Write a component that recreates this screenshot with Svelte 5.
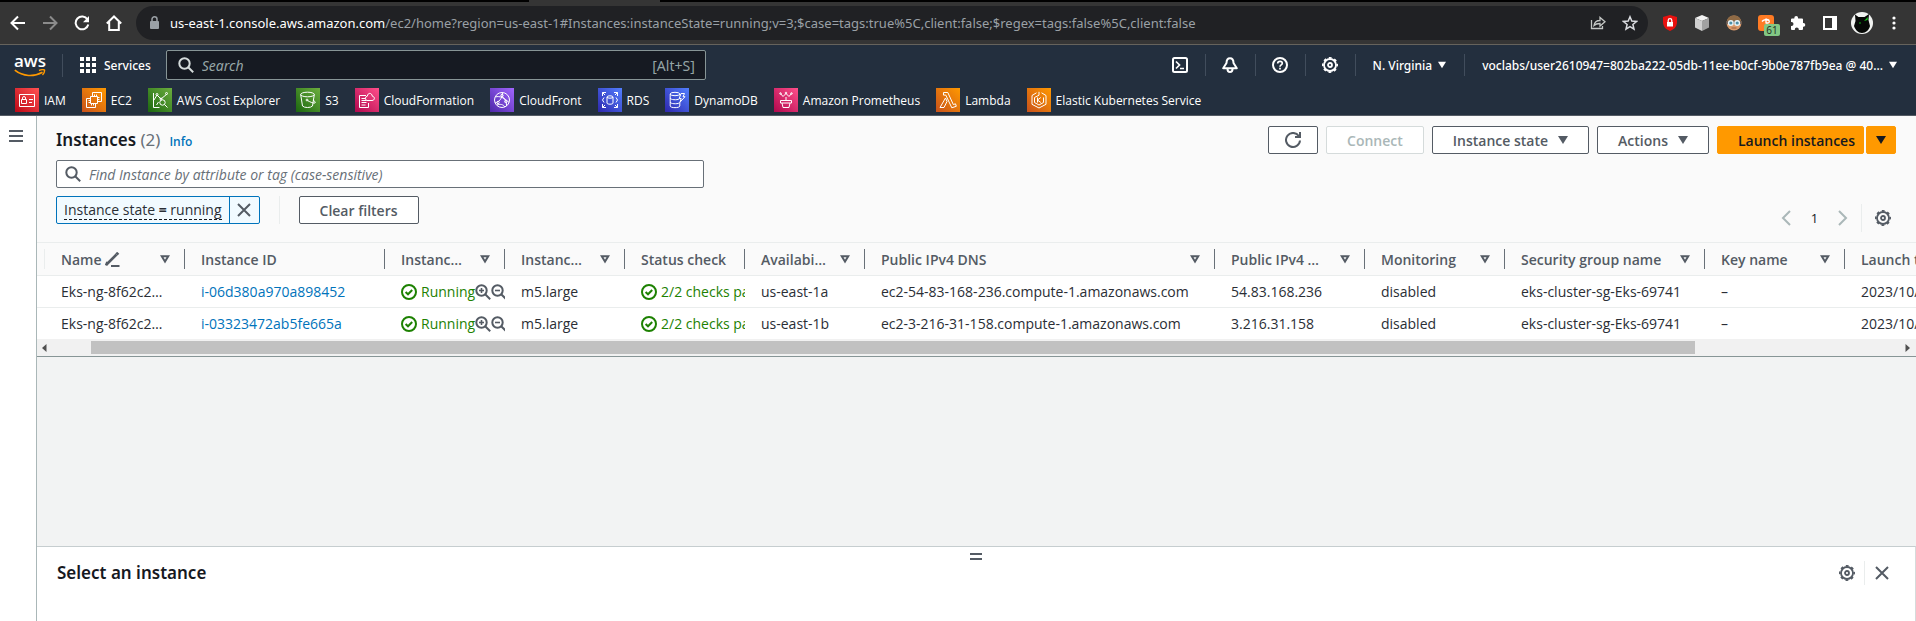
<script>
  const bookmarks = [
    { id: 'iam', label: 'IAM', from: '#bd0816', to: '#ff5252' },
    { id: 'ec2', label: 'EC2', from: '#c8511b', to: '#ff9900' },
    { id: 'cost', label: 'AWS Cost Explorer', from: '#1b660f', to: '#6cae3e' },
    { id: 's3', label: 'S3', from: '#1b660f', to: '#6cae3e' },
    { id: 'cfn', label: 'CloudFormation', from: '#b0084d', to: '#ff4f8b' },
    { id: 'cdn', label: 'CloudFront', from: '#4d27a8', to: '#a166ff' },
    { id: 'rds', label: 'RDS', from: '#2e27ad', to: '#527fff' },
    { id: 'ddb', label: 'DynamoDB', from: '#2e27ad', to: '#527fff' },
    { id: 'amp', label: 'Amazon Prometheus', from: '#b0084d', to: '#ff4f8b' },
    { id: 'lambda', label: 'Lambda', from: '#c8511b', to: '#ff9900' },
    { id: 'eks', label: 'Elastic Kubernetes Service', from: '#c8511b', to: '#ff9900' }
  ];

  const columns = [
    { key: 'name', label: 'Name', width: 140, sort: true, edit: true },
    { key: 'id', label: 'Instance ID', width: 200 },
    { key: 'state', label: 'Instanc…', width: 120, sort: true },
    { key: 'type', label: 'Instanc…', width: 120, sort: true },
    { key: 'check', label: 'Status check', width: 120 },
    { key: 'zone', label: 'Availabi…', width: 120, sort: true },
    { key: 'dns', label: 'Public IPv4 DNS', width: 350, sort: true },
    { key: 'ip', label: 'Public IPv4 …', width: 150, sort: true },
    { key: 'monitoring', label: 'Monitoring', width: 140, sort: true },
    { key: 'group', label: 'Security group name', width: 200, sort: true },
    { key: 'keyName', label: 'Key name', width: 140, sort: true },
    { key: 'launch', label: 'Launch time', width: 160 }
  ];

  const rows = [
    {
      name: 'Eks-ng-8f62c2…', id: 'i-06d380a970a898452', state: 'Running', type: 'm5.large',
      check: '2/2 checks passed', zone: 'us-east-1a',
      dns: 'ec2-54-83-168-236.compute-1.amazonaws.com', ip: '54.83.168.236',
      monitoring: 'disabled', group: 'eks-cluster-sg-Eks-69741', keyName: '–', launch: '2023/10/10'
    },
    {
      name: 'Eks-ng-8f62c2…', id: 'i-03323472ab5fe665a', state: 'Running', type: 'm5.large',
      check: '2/2 checks passed', zone: 'us-east-1b',
      dns: 'ec2-3-216-31-158.compute-1.amazonaws.com', ip: '3.216.31.158',
      monitoring: 'disabled', group: 'eks-cluster-sg-Eks-69741', keyName: '–', launch: '2023/10/10'
    }
  ];
</script>

{#snippet gear()}
  <svg class="ico" width="16" height="16" viewBox="0 0 16 16" fill="none" stroke="currentColor" aria-hidden="true">
    <circle cx="8" cy="8" r="6" stroke-width="1.800" />
    <circle cx="8" cy="8" r="7.200" stroke-width="1.600" stroke-dasharray="2.830 2.824" stroke-dashoffset="1.400" />
    <circle cx="8" cy="8" r="2" stroke-width="1.800" />
  </svg>
{/snippet}

{#snippet caret(size)}
  <svg class="ico" width={size} height={size} viewBox="0 0 10 10" aria-hidden="true">
    <path d="M0 1h10L5 9z" fill="currentColor" />
  </svg>
{/snippet}

{#snippet cross()}
  <svg class="ico" width="16" height="16" viewBox="0 0 16 16" aria-hidden="true">
    <path d="M2 2l12 12M14 2L2 14" stroke="currentColor" stroke-width="2" />
  </svg>
{/snippet}

{#snippet lens(mark)}
  <svg class="ico" width="16" height="16" viewBox="0 0 16 16" fill="none" stroke="currentColor" stroke-width="2" aria-hidden="true">
    <circle cx="6.500" cy="6.500" r="5.200" />
    <path d="M10.200 10.200l5 5" />
    {#if mark}<path d="M4 6.500h5" stroke-width="1.600" />{/if}
    {#if mark === 'plus'}<path d="M6.500 4v5" stroke-width="1.600" />{/if}
  </svg>
{/snippet}

{#snippet okay()}
  <svg class="ico" width="16" height="16" viewBox="0 0 16 16" fill="none" stroke="currentColor" stroke-width="2" aria-hidden="true">
    <circle cx="8" cy="8" r="7" />
    <path d="M4.600 8l2.400 2.300 4.200-4.300" />
  </svg>
{/snippet}

{#snippet service(id)}
  <svg width="24" height="24" viewBox="0 0 24 24" fill="none" stroke="#fff" stroke-width="1" aria-hidden="true">
    {#if id === 'iam'}
      <path d="M4.500 6.500h15v12h-15zM6.500 11.500h5v4h-5zM7.500 11.500v-1.500a1.500 1.500 0 0 1 3 0v1.500M14 11.500h4M14 14.500h3" />
    {:else if id === 'ec2'}
      <path d="M10.500 7V4.500h9v9H17M7 10.500H4.500v9h9V17" />
      <path d="M8.500 8.500h7v7h-7zM10.500 6.500v2M12.500 6.500v2M14.500 6.500v2M9.500 15.500v2M11.500 15.500v2M13.500 15.500v2M6.500 10.500h2M6.500 12.500h2M6.500 14.500h2M15.500 9.500h2M15.500 11.500h2M15.500 13.500h2" />
    {:else if id === 'cost'}
      <path d="M5.500 5v14.500h6M6 12l3-5 4 4 6-5M8.500 17l2-3" />
      <circle cx="9" cy="6.500" r="1" /><circle cx="13" cy="11" r="1" /><circle cx="18.500" cy="5.500" r="1" />
      <circle cx="14.500" cy="14.500" r="2.700" /><path d="M16.500 16.500l3 3" />
    {:else if id === 's3'}
      <ellipse cx="11.500" cy="6.500" rx="6.800" ry="2.300" />
      <path d="M4.700 6.500l1.800 11.500c1.500 2 8.500 2 10 0l1.800-11.500M11.500 12.500c3 1.700 6 3 7.500 2.500 1-.8-.5-2-2-2.800" />
      <circle cx="11" cy="12" r=".9" />
    {:else if id === 'cfn'}
      <path d="M11 7.500H4.500v12h9V15M6.500 10.500h4M6.500 12.500h5M6.500 14.500h5M6.500 17h4" />
      <path d="M12 12.500a2.200 2.200 0 0 1 .3-4.300c.4-3.800 4.600-3.700 5 0 2.800.3 2.800 4.300-.3 4.300z" />
    {:else if id === 'cdn'}
      <circle cx="12" cy="12" r="7.500" />
      <path d="M5 15c4-1 7-4 7.500-10M12 8.500c3 2 5 5.500 4.500 9.500M5.500 9c4-1.500 9 1 13.500 5.500M7 17c3-1 6-1 8 2" />
      <circle cx="12" cy="7.500" r="1.200" /><circle cx="8" cy="14.500" r="1.200" /><circle cx="15.800" cy="13.500" r="1.200" />
    {:else if id === 'rds'}
      <path d="M4.500 8V4.500H8M16 4.500h3.500V8M19.500 16v3.500H16M8 19.500H4.500V16M4.500 4.500L7 7M19.500 4.500L17 7M19.500 19.500L17 17M4.500 19.500L7 17M6 9.500L4.500 12 6 14.500M18 9.500l1.500 2.500-1.500 2.500" />
      <ellipse cx="12" cy="9" rx="3" ry="1.200" /><path d="M9 9v6c0 1.600 6 1.600 6 0V9" />
    {:else if id === 'ddb'}
      <ellipse cx="10" cy="6" rx="4.800" ry="1.700" />
      <path d="M5.200 6v12c0 2.200 9.600 2.200 9.600 0V14M5.200 10c0 2 7 2.200 9 1M5.200 14c0 2 7 2.200 9 1M14.800 6v1.500M16 5.500h3.500l-1.500 3.200h2l-5 5.500 1.200-3.700h-2z" />
    {:else if id === 'amp'}
      <path d="M6.500 12.500h11v2.500h-11zM8 15l1 4.500h6l1-4.500M12 12.500V9M6.500 5.500L9 8.500l3-3 3 3 2.500-3" />
      <circle cx="6.500" cy="5.500" r=".8" /><circle cx="12" cy="5" r=".8" /><circle cx="17.500" cy="5.500" r=".8" />
    {:else if id === 'lambda'}
      <path d="M7.500 4.500h4.300l5.500 12 2.200-.7.800 2.500-4.500 1.500-6-12.700H7.500zM9.500 10l1.500 3.500-3 6H4z" />
    {:else}
      <path d="M14.500 4.800L19 7.500v8.800L12 20l-7-3.700V7.500l4.500-2.700M12 3.800v3.400M16.500 9.500v5L12 17l-4.500-2.500v-5L12 7.200" />
      <path d="M10.500 9.500v5M13.800 9.500L10.500 12l3.300 2.500" />
    {/if}
  </svg>
{/snippet}

<div class="page">
  <header class="chrome">
    <div class="strip"><span class="tab"></span></div>
    <div class="toolbar">
      <button class="cbtn" aria-label="Back">
        <svg width="16" height="16" viewBox="0 0 16 16" fill="none" stroke="#fff" stroke-width="2"><path d="M15 8H2M8 1.500L1.500 8 8 14.500" /></svg>
      </button>
      <button class="cbtn" aria-label="Forward" disabled>
        <svg width="16" height="16" viewBox="0 0 16 16" fill="none" stroke="#8b8b8b" stroke-width="2"><path d="M1 8h13M8 1.500L14.500 8 8 14.500" /></svg>
      </button>
      <button class="cbtn" aria-label="Reload">
        <svg width="16" height="16" viewBox="0 0 16 16" fill="none" stroke="#fff" stroke-width="2"><path d="M13.500 4.500A6.400 6.400 0 1 0 14.300 9.500" /><path d="M15 1v6.300H9z" fill="#fff" stroke="none" /></svg>
      </button>
      <button class="cbtn" aria-label="Home">
        <svg width="16" height="16" viewBox="0 0 16 16" fill="none" stroke="#fff" stroke-width="2"><path d="M.8 8.500L8 1.500l7.200 7M3.200 7v8h9.600V7" /></svg>
      </button>
      <div class="omnibox">
        <svg width="10" height="14" viewBox="0 0 10 14"><rect x="0" y="5" width="9" height="8" rx="1" fill="#9aa0a6" /><path d="M2 5.500V3.300a2.500 2.500 0 0 1 5 0v2.200" fill="none" stroke="#9aa0a6" stroke-width="1.500" /></svg>
        <p class="url"><b>us-east-1.console.aws.amazon.com</b>/ec2/home?region=us-east-1#Instances:instanceState=running;v=3;$case=tags:true%5C,client:false;$regex=tags:false%5C,client:false</p>
        <button class="cbtn small" aria-label="Share">
          <svg width="16" height="16" viewBox="0 0 16 16" fill="none" stroke="#c4c7c5" stroke-width="1.300"><path d="M1.500 5v8.500h11V11M4 10.500c.5-3.500 3-5 6-5V2.500L15 6.800l-5 4.200V8.500c-3 0-4.500.5-6 2z" /></svg>
        </button>
        <button class="cbtn small" aria-label="Bookmark this page">
          <svg width="16" height="16" viewBox="0 0 16 16" fill="none" stroke="#dadce0" stroke-width="1.500"><path d="M8 1.800l1.800 4.300 4.700.4-3.600 3 1.100 4.600L8 11.600l-4 2.500 1.100-4.600-3.600-3 4.700-.4z" /></svg>
        </button>
      </div>
      <div class="extensions">
        <button class="ext" aria-label="Ad blocker">
          <svg width="16" height="16" viewBox="0 0 16 16"><path d="M8 0l7 2v5c0 4.500-3 7.500-7 9-4-1.500-7-4.500-7-9V2z" fill="#e8110f" /><rect x="5" y="7" width="6" height="4.500" fill="#fff" /><path d="M6.200 7V5.500a1.800 1.800 0 0 1 3.600 0V7" fill="none" stroke="#fff" stroke-width="1.300" /></svg>
        </button>
        <button class="ext" aria-label="Cube">
          <svg width="16" height="16" viewBox="0 0 16 16"><path d="M8 0l7 3-7 3-7-3z" fill="#f3f3f3" /><path d="M1 3l7 3v10l-7-3.500z" fill="#d0d0d0" /><path d="M15 3L8 6v10l7-3.500z" fill="#a2a2a2" /></svg>
        </button>
        <button class="ext" aria-label="Goggles">
          <svg width="16" height="16" viewBox="0 0 16 16"><circle cx="8" cy="8" r="7.500" fill="#d99a6c" /><path d="M.8 6A7.500 7.500 0 0 1 15.200 6z" fill="#8f6a45" /><path d="M0 6h16v3H0z" fill="#6b5a50" /><circle cx="4.800" cy="8" r="3" fill="#e8f4f8" /><circle cx="11.200" cy="8" r="3" fill="#e8f4f8" /><circle cx="4.800" cy="8" r="1.600" fill="#4d8fa8" /><circle cx="11.200" cy="8" r="1.600" fill="#4d8fa8" /><path d="M5.500 13h5" stroke="#9c5d3a" /></svg>
        </button>
        <button class="ext" aria-label="Coupons">
          <svg width="16" height="16" viewBox="0 0 16 16"><rect width="16" height="16" rx="3" fill="#ff7b24" /><path d="M4 6.500c1.500-2 5-2.800 7-1.500M8 3.500v5M8 5h1.800a1.500 1.500 0 0 1 0 3H8" fill="none" stroke="#fff" stroke-width="1.300" /></svg>
          <span class="count">61</span>
        </button>
        <button class="ext" aria-label="Extensions">
          <svg width="16" height="16" viewBox="0 0 16 16"><path d="M6.200 1a1.900 1.900 0 0 1 1.900 1.900V3.500H12a1 1 0 0 1 1 1v3.600h.5a1.800 1.800 0 0 1 0 3.600H13V14a1 1 0 0 1-1 1H8.800v-.5a2 2 0 0 0-4 0v.5H2a1 1 0 0 1-1-1v-3h.5a2 2 0 0 0 0-4H1V4.500a1 1 0 0 1 1-1h2.300V2.900A1.900 1.900 0 0 1 6.200 1z" fill="#fff" /></svg>
        </button>
        <button class="ext" aria-label="Side panel">
          <svg width="16" height="16" viewBox="0 0 16 16"><path d="M2 2h12v12H2z" fill="none" stroke="#fff" stroke-width="2" /><path d="M10 2h5v12h-5z" fill="#fff" /></svg>
        </button>
      </div>
      <button class="avatar" aria-label="Profile">
        <svg width="22" height="22" viewBox="0 0 22 22"><circle cx="11" cy="11" r="11" fill="#f1f3f1" /><path d="M4 2.500L7.500 5h6L18 2l-.5 6 1.500 6c-1 4-4 7-8 7s-6.500-3-8-7l1.500-5z" fill="#060806" /><path d="M13 9l4-4-.5 3z" fill="#17d321" /><circle cx="9" cy="11" r="1" fill="#0c7512" /></svg>
      </button>
      <button class="cbtn" aria-label="Menu">
        <svg width="4" height="14" viewBox="0 0 4 14" fill="#fff"><circle cx="2" cy="2" r="1.600" /><circle cx="2" cy="7" r="1.600" /><circle cx="2" cy="12" r="1.600" /></svg>
      </button>
    </div>
  </header>

  <nav class="aws">
    <div class="bar">
      <a class="logo" href="#home" aria-label="AWS home">
        <span>aws</span>
        <svg width="32" height="8" viewBox="0 0 32 8" fill="none" stroke="#ff9900" stroke-width="1.700"><path d="M.8 1.200C9 7.800 20 8 28.500 3.200" /><path d="M25 1.500c2-.8 4.500-1 5.500-.5.300 1.400-.6 3.600-2 5" stroke-width="1.400" /></svg>
      </a>
      <button class="services">
        <svg width="16" height="16" viewBox="0 0 16 16" fill="#fff"><path d="M0 0h4v4H0zM6 0h4v4H6zM12 0h4v4h-4zM0 6h4v4H0zM6 6h4v4H6zM12 6h4v4h-4zM0 12h4v4H0zM6 12h4v4H6zM12 12h4v4h-4z" /></svg>
        Services
      </button>
      <label class="find">
        {@render lens()}
        <input type="text" placeholder="Search" aria-label="Search" />
        <span>[Alt+S]</span>
      </label>
      <div class="tools">
        <button aria-label="CloudShell"><svg width="16" height="16" viewBox="0 0 16 16" fill="none" stroke="#fff" stroke-width="2"><rect x="1" y="1" width="14" height="14" rx="1.500" /><path d="M4 4.500L7.500 8 4 11.500M8 11.500h4" stroke-width="1.700" /></svg></button>
        <button aria-label="Notifications"><svg width="16" height="16" viewBox="0 0 16 16" fill="none" stroke="#fff" stroke-width="2" stroke-linejoin="round"><path d="M8 1.200C5.500 1.200 4.500 3.500 4.500 6L1.200 11.200h13.600L11.500 6c0-2.500-1-4.800-3.500-4.800zM5.500 12c0 4 5 4 5 0" /></svg></button>
        <button aria-label="Help"><svg width="16" height="16" viewBox="0 0 16 16" fill="none" stroke="#fff" stroke-width="2"><circle cx="8" cy="8" r="7" /><path d="M5.700 6.500C5.700 3.500 10.300 3.700 10.300 6.200 10.300 8 8 7.800 8 9.800M8 10.700v1.800" stroke-width="1.700" /></svg></button>
        <button aria-label="Settings">{@render gear()}</button>
      </div>
      <button class="region">N. Virginia {@render caret(8)}</button>
      <button class="account">voclabs/user2610947=802ba222-05db-11ee-b0cf-9b0e787fb9ea @ 40... {@render caret(8)}</button>
    </div>
    <div class="marks">
      {#each bookmarks as mark}
        <a href={'#' + mark.id}>
          <span class="tile" style="background: linear-gradient(45deg, {mark.from}, {mark.to})">{@render service(mark.id)}</span>
          {mark.label}
        </a>
      {/each}
    </div>
  </nav>

  <div class="body">
    <aside>
      <button aria-label="Open navigation">
        <svg width="14" height="12" viewBox="0 0 14 12" fill="#545b64"><path d="M0 0h14v2H0zM0 5h14v2H0zM0 10h14v2H0z" /></svg>
      </button>
    </aside>
    <main>
      <section class="instances">
        <div class="head">
          <h1>Instances <span>(2)</span></h1>
          <a class="info" href="#info">Info</a>
          <div class="actions">
            <button class="btn icon" aria-label="Refresh">
              <svg width="16" height="16" viewBox="0 0 16 16" fill="none" stroke="currentColor" stroke-width="2"><path d="M15 8.500A7 7 0 1 1 13.800 4M15 0v5h-5" /></svg>
            </button>
            <button class="btn" disabled>Connect</button>
            <button class="btn">Instance state {@render caret(10)}</button>
            <button class="btn">Actions {@render caret(10)}</button>
            <div class="split">
              <button class="btn primary">Launch instances</button>
              <button class="btn primary drop" aria-label="More launch options">{@render caret(10)}</button>
            </div>
          </div>
        </div>
        <label class="query">
          {@render lens()}
          <input type="text" placeholder="Find Instance by attribute or tag (case-sensitive)" aria-label="Find Instance" />
        </label>
        <div class="filters">
          <div class="token">
            <button class="term"><span>Instance state <b>=</b> running</span></button>
            <button class="remove" aria-label="Remove filter">{@render cross()}</button>
          </div>
          <span class="rule"></span>
          <button class="btn">Clear filters</button>
          <div class="pager">
            <button aria-label="Previous page"><svg width="10" height="16" viewBox="0 0 10 16" fill="none" stroke="#aab7b8" stroke-width="2"><path d="M9 1L2 8l7 7" /></svg></button>
            <span>1</span>
            <button aria-label="Next page"><svg width="10" height="16" viewBox="0 0 10 16" fill="none" stroke="#aab7b8" stroke-width="2"><path d="M1 1l7 7-7 7" /></svg></button>
            <i class="rule"></i>
            <button class="prefs" aria-label="Preferences">{@render gear()}</button>
          </div>
        </div>
        <div class="grid">
          <table>
            <colgroup>
              <col style="width: 8px" />
              {#each columns as col}<col style="width: {col.width}px" />{/each}
            </colgroup>
            <thead>
              <tr>
                <th class="pick"></th>
                {#each columns as col}
                  <th>
                    <div>
                      {col.label}
                      {#if col.edit}
                        <svg width="15" height="15" viewBox="0 0 15 15" fill="none" stroke="currentColor" stroke-width="2" aria-hidden="true"><path d="M6 14h8.500" /><path d="M1 13.500L2.500 10M1.500 12.500L11.500 2.500" stroke-width="2.600" /><path d="M11.500 2.500l1.700-1.700" stroke-width="3" /></svg>
                      {/if}
                      {#if col.sort}
                        <svg class="sort" width="10" height="9" viewBox="0 0 10 9" fill="none" stroke="currentColor" stroke-width="2" aria-hidden="true"><path d="M1.700 1.200h6.600L5 6.500z" /></svg>
                      {/if}
                    </div>
                  </th>
                {/each}
              </tr>
            </thead>
            <tbody>
              {#each rows as row}
                <tr>
                  <td class="pick"></td>
                  {#each columns as col}
                    <td class={col.key}>
                      {#if col.key === 'id'}
                        <a href={'#' + row.id}>{row.id}</a>
                      {:else if col.key === 'state'}
                        <div class="status">{@render okay()}<span>{row.state}</span>
                          <button aria-label="Include this value">{@render lens('plus')}</button><button aria-label="Exclude this value">{@render lens('minus')}</button>
                        </div>
                      {:else if col.key === 'check'}
                        <div class="status">{@render okay()}<span>{row.check}</span></div>
                      {:else}
                        {row[col.key]}
                      {/if}
                    </td>
                  {/each}
                </tr>
              {/each}
            </tbody>
          </table>
        </div>
        <div class="scroll">
          <svg width="5" height="8" viewBox="0 0 5 8" fill="#505050"><path d="M4.500 0v8L0 4z" /></svg>
          <div class="track"><span></span></div>
          <svg width="5" height="8" viewBox="0 0 5 8" fill="#505050"><path d="M.5 0v8L5 4z" /></svg>
        </div>
      </section>
      <div class="blank"></div>
      <section class="detail">
        <button class="grip" aria-label="Resize panel"></button>
        <div class="drow">
          <h2>Select an instance</h2>
          <button aria-label="Panel preferences">{@render gear()}</button>
          <span class="rule"></span>
          <button aria-label="Close panel">{@render cross()}</button>
        </div>
      </section>
    </main>
  </div>
</div>

<style>
  :global(body) {
    font-family: "Open Sans", "Noto Sans", sans-serif;
    font-size: 14px;
    color: #16191f;
  }
  .page { display: flex; flex-direction: column; min-height: 100vh; overflow: hidden; }
  .page :is(button, input) { font: inherit; color: inherit; margin: 0; padding: 0; border: 0; background: none; box-sizing: border-box; }
  .page button { display: flex; align-items: center; justify-content: center; cursor: pointer; white-space: nowrap; }
  .page a { text-decoration: none; }
  .page svg { display: block; flex: none; }
  h1, h2, p { margin: 0; }

  .chrome { background: #353535; border-bottom: 1px solid #66635c; }
  .strip { height: 2px; background: #000; padding-left: 529px; }
  .tab { display: block; width: 131px; height: 2px; background: #353535; }
  .toolbar { display: flex; align-items: center; height: 42px; padding: 0 14px 0 10px; }
  .cbtn { flex: none; width: 16px; height: 32px; }
  .toolbar > .cbtn { margin-right: 16px; }
  .toolbar > .cbtn:last-child { margin-right: 0; }
  .omnibox { display: flex; align-items: center; flex: 1; min-width: 0; height: 34px; border-radius: 17px; background: #202124; padding: 0 7px 0 14px; margin: 0 14px 0 -2px; gap: 10px; }
  .url { flex: 1; min-width: 0; overflow: hidden; white-space: nowrap; font-family: "Noto Sans", sans-serif; font-size: 13px; color: #9aa0a6; }
  .url b { color: #fff; font-weight: 400; }
  .omnibox .cbtn.small { width: 22px; }
  .extensions { display: flex; gap: 16px; }
  .page .ext { position: relative; width: 16px; height: 32px; }
  .count { position: absolute; left: 6px; top: 17px; width: 16px; line-height: 12px; border-radius: 2px; background: #81c784; color: #1c2a1d; font-size: 10px; }
  .page .avatar { margin: 0 13px; }

  .aws { background: #232f3e; border-bottom: 1px solid #545b64; color: #fff; font-size: 12px; font-weight: 500; }
  .bar { display: flex; align-items: center; height: 40px; padding-right: 19px; font-family: "Noto Sans", sans-serif; }
  .logo { width: 63px; box-sizing: border-box; padding-left: 14px; border-right: 1px solid #414d5c; color: #fff; }
  .logo span { display: block; font: 600 17px/14px "Open Sans", sans-serif; padding-bottom: 1px; }
  .page .services { gap: 8px; margin: 0 15px 0 17px; }
  .find { display: flex; align-items: center; flex: 0 1 540px; min-width: 0; height: 30px; box-sizing: border-box; border: 1px solid #879596; border-radius: 2px; background: #161a22; padding: 0 10px 0 11px; gap: 8px; font-size: 14px; font-weight: 400; color: #d5dbdb; }
  .find input { flex: 1; min-width: 0; }
  .page .find input::placeholder { font-style: italic; color: #95a5a6; opacity: 1; }
  .find span { color: #95a5a6; }
  .tools { display: flex; margin-left: auto; }
  .page .tools button { width: 50px; height: 22px; border-right: 1px solid #414d5c; }
  .page .region { height: 22px; gap: 6px; padding: 0 18px 0 17px; border-right: 1px solid #414d5c; }
  .page .account { gap: 6px; padding-left: 17px; }
  .marks { display: flex; height: 30px; gap: 16px; padding: 3px 15px 0; box-sizing: border-box; }
  .marks a { display: flex; align-items: center; height: 24px; gap: 5px; color: #fff; white-space: nowrap; }
  .tile { width: 24px; height: 24px; }

  .body { flex: 1; display: flex; min-height: 0; }
  aside { flex: none; width: 27px; background: #fff; border-right: 1px solid #aab7b8; padding: 14px 0 0 9px; }
  main { flex: 1; min-width: 0; display: flex; flex-direction: column; background: #f2f3f3; }
  .instances { background: #fafafa; border-bottom: 1px solid #879596; }
  .head { display: flex; align-items: center; padding: 10px 20px 0 19px; height: 28px; }
  h1, h2 { font-family: "Noto Sans", sans-serif; font-size: 17px; line-height: 24px; font-weight: 600; }
  h1 span { font-weight: 400; color: #687078; }
  .info { color: #0073bb; font-size: 12px; font-weight: 600; margin-left: 9px; padding-top: 2px; }
  .actions { display: flex; gap: 8px; margin-left: auto; }
  .page .btn { height: 28px; padding: 0 20px; border: 1px solid #545b64; border-radius: 2px; background: #fff; color: #545b64; font-size: 14px; font-weight: 600; gap: 10px; }
  .page .btn:disabled { border-color: #d5dbdb; color: #aab7b8; }
  .page .btn.icon { padding: 0 16px; }
  .split { display: flex; gap: 2px; }
  .page .btn.primary { background: #ff9900; border-color: #ff9900; color: #16191f; padding-right: 8px; }
  .page .btn.drop { padding: 0 9px; }
  .query { display: flex; align-items: center; width: 648px; max-width: 100%; height: 28px; box-sizing: border-box; border: 1px solid #687078; border-radius: 2px; background: #fff; margin: 6px 0 0 19px; padding: 0 8px; gap: 8px; color: #545b64; }
  .query input { flex: 1; min-width: 0; height: 26px; }
  .page .query input::placeholder { font-style: italic; color: #687078; opacity: 1; }
  .filters { display: flex; align-items: flex-start; height: 46px; padding: 8px 20px 0 19px; }
  .token { display: flex; height: 28px; box-sizing: border-box; border: 1px solid #0073bb; border-radius: 2px; background: #f1faff; color: #2a2e35; }
  .page .token .term { padding: 0 7px; }
  .page .term span { line-height: 18px; border-bottom: 1px dashed #16191f; }
  .page .token .remove { width: 30px; border-left: 1px solid #0073bb; color: #545b64; }
  .rule { width: 1px; height: 28px; background: #eaeded; }
  .filters > .rule { margin: 0 19px; }
  .pager { display: flex; align-items: center; margin-left: auto; padding: 8px 5px 0 0; }
  .pager span { width: 47px; text-align: center; font-size: 13px; font-weight: 500; }
  .pager .rule { margin: 0 13px; }
  .page .prefs { color: #545b64; }

  .grid { overflow: hidden; border-top: 1px solid #eaeded; background: #fff; }
  table { width: 1848px; min-width: 100%; table-layout: fixed; border-collapse: separate; border-spacing: 0; }
  th, td { padding: 0 0 0 16px; text-align: left; white-space: nowrap; overflow: hidden; }
  th { height: 32px; background: #fafafa; border-bottom: 1px solid #eaeded; color: #545b64; font-weight: 600; }
  th div { display: flex; align-items: center; height: 20px; gap: 3px; padding-right: 14px; border-right: 1px solid #687078; }
  th .sort { margin-left: auto; }
  th.pick { padding: 0; background: linear-gradient(#eaeded, #eaeded) right / 1px 20px no-repeat #fafafa; }
  td.pick { padding: 0; }
  td { height: 31px; color: #2a2e35; border-bottom: 1px solid #eaeded; }
  tr:last-child td { border-bottom: 0; }
  td a { color: #0073bb; }
  .status { display: flex; align-items: center; color: #1d8102; }
  .status span { margin-left: 4px; }
  .page .status button { color: #545b64; width: 16px; }
  .scroll { display: flex; align-items: center; height: 17px; background: #f1f1f1; padding: 0 6px 0 5px; }
  .track { flex: 1; height: 13px; margin: 0 5px; padding: 0 11% 0 39px; }
  .track span { display: block; height: 13px; background: #c1c1c1; }
  .blank { flex: 1; }
  .detail { background: #fff; border-top: 1px solid #c6cdcf; border-right: 1px solid #d5dbdb; height: 74px; }
  .page .grip { width: 12px; height: 7px; margin: 6px auto 0; border: solid #545b64; border-width: 2px 0; }
  .drow { display: flex; align-items: center; padding: 1px 25px 0 20px; }
  .drow h2 { margin-right: auto; }
  .page .drow button { color: #545b64; }
  .drow .rule { height: 24px; margin: 0 9px; }
</style>
